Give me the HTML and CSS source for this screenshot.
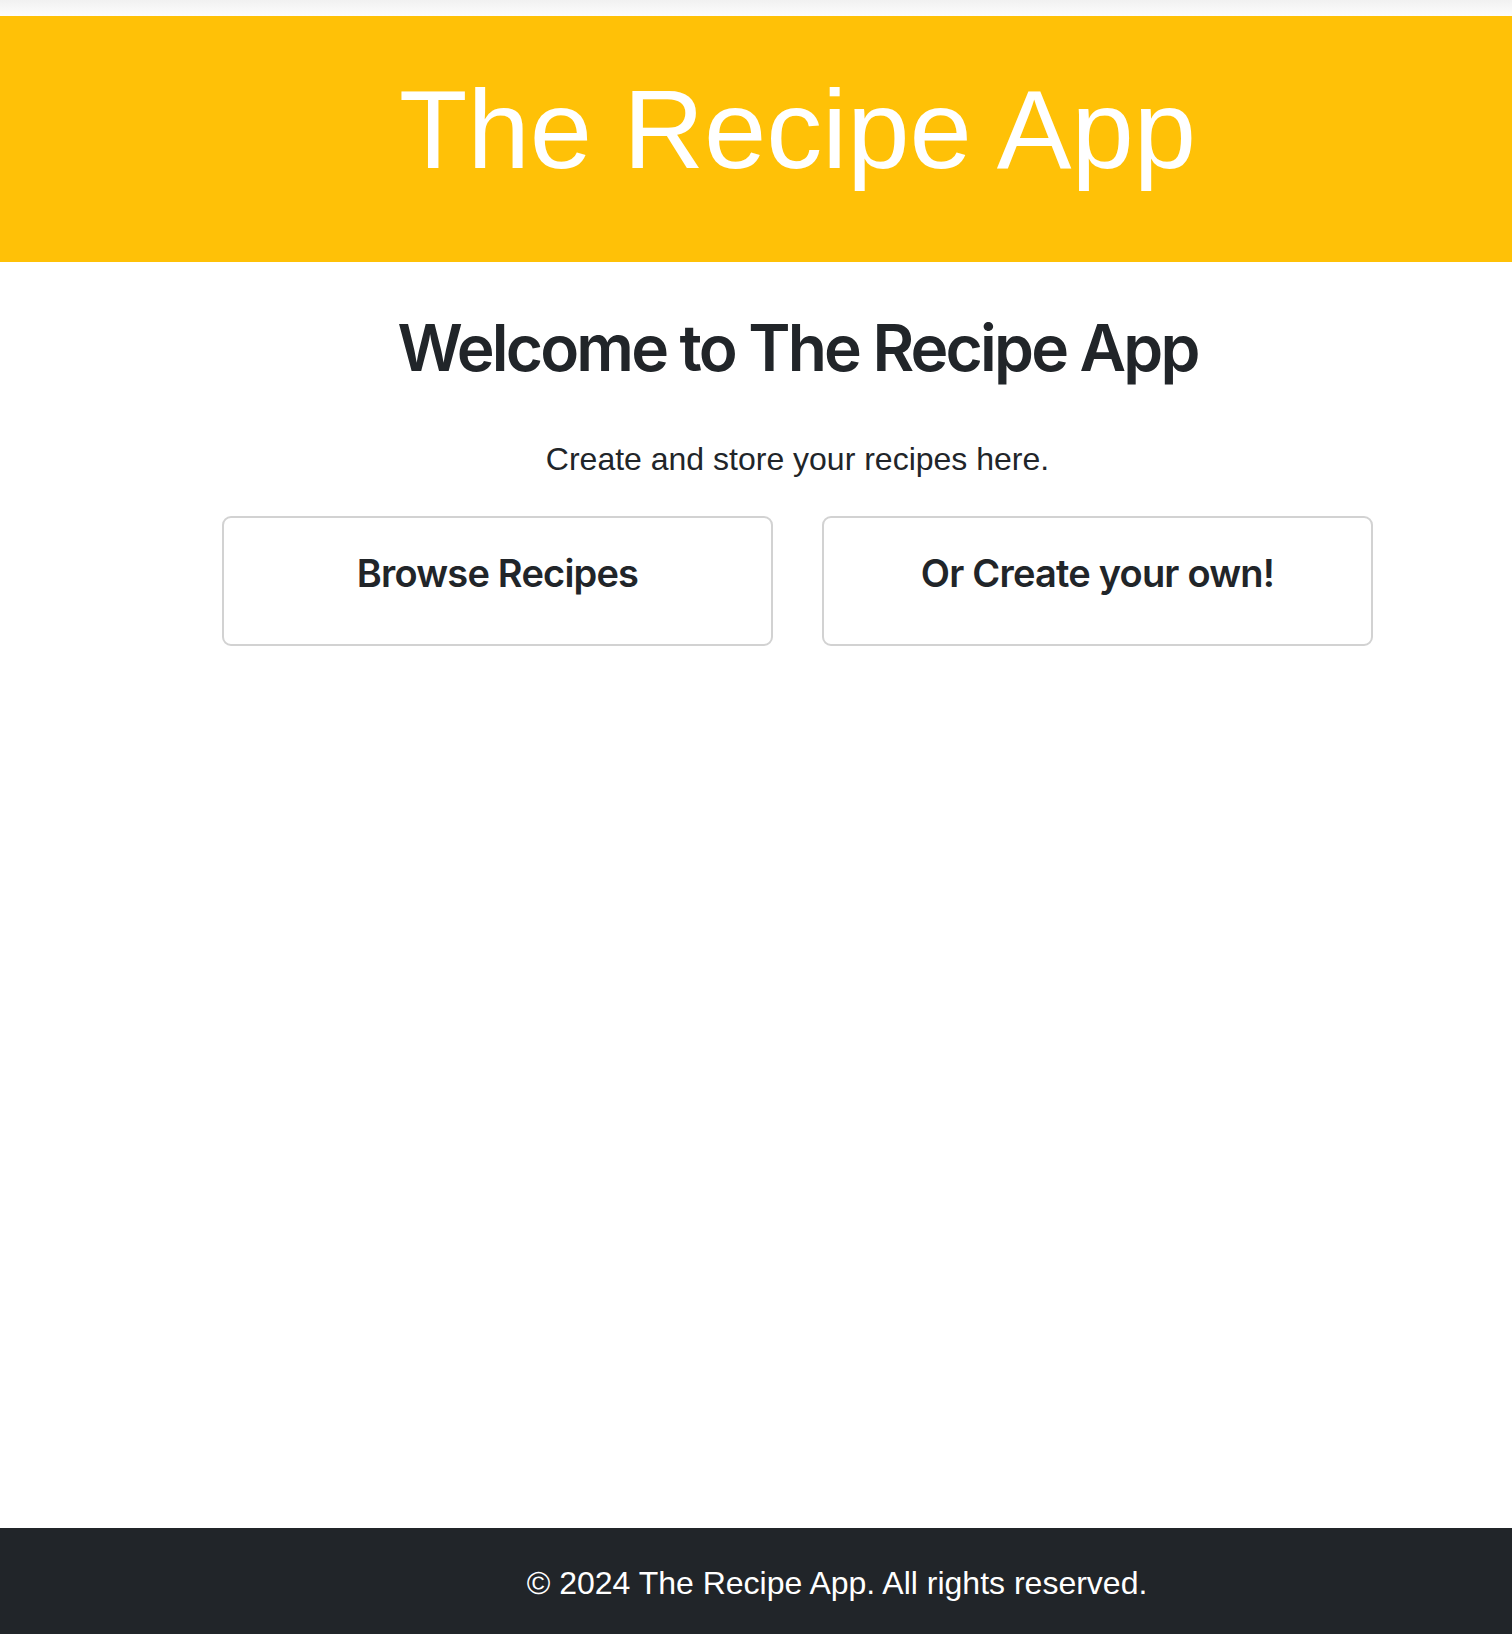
FILE: index.html
```html
<!DOCTYPE html>
<html lang="en">
<head>
<meta charset="utf-8">
<title>The Recipe App</title>
<link rel="stylesheet" href="styles.css">
</head>
<body>
<div class="topbar"></div>
<header class="site-header">
  <h1 class="site-title">The Recipe App</h1>
</header>
<main class="main">
  <div class="container">
    <h2 class="welcome">Welcome to The Recipe App</h2>
    <p class="lead">Create and store your recipes here.</p>
    <div class="actions">
      <a class="action-card" href="#">Browse Recipes</a>
      <a class="action-card" href="#">Or Create your own!</a>
    </div>
  </div>
</main>
<footer class="site-footer">
  <p class="footer-text">© 2024 The Recipe App. All rights reserved.</p>
</footer>
</body>
</html>
```

FILE: styles.css
```css
* { box-sizing: border-box; }
html, body { margin: 0; padding: 0; }
body {
  min-height: 1634px;
  display: flex;
  flex-direction: column;
  background: #fff;
  color: #212529;
  font-family: "Liberation Sans", Arial, sans-serif;
}
.topbar {
  height: 16px;
  background: linear-gradient(#f1f1f1, #fdfdfd);
}
.site-header {
  height: 246px;
  background: #ffc107;
  padding: 58px 0 0 83px;
}
.site-title {
  margin: 0;
  text-align: center;
  color: #fff;
  font-family: "Liberation Sans", Arial, sans-serif;
  font-weight: 400;
  font-size: 112px;
  line-height: 1;
}
.main {
  flex: 1;
  padding: 48px 0 0 83px;
}
.container {
  width: 1151px;
  margin: 0 auto;
}
.welcome {
  margin: 0;
  text-align: center;
  font-family: Inter, "Noto Sans", sans-serif;
  font-weight: 600;
  font-size: 64px;
  line-height: 1.2;
  letter-spacing: -2.8px;
}
.lead {
  margin: 48px 0 0;
  text-align: center;
  font-size: 32px;
  line-height: 1.5;
}
.actions {
  margin-top: 33px;
  display: grid;
  grid-template-columns: 1fr 1fr;
  gap: 49px;
}
.action-card {
  display: block;
  height: 130px;
  padding-top: 33px;
  border: 2px solid #d2d2d2;
  border-radius: 9px;
  text-align: center;
  text-decoration: none;
  color: #212529;
  font-family: Inter, "Noto Sans", sans-serif;
  font-weight: 600;
  font-size: 38px;
  line-height: 1.2;
  letter-spacing: -0.8px;
}
.site-footer {
  height: 106px;
  background: #212529;
  padding: 31px 0 0 162px;
}
.footer-text {
  margin: 0;
  text-align: center;
  color: #fff;
  font-size: 32px;
  line-height: 1.5;
}
```
